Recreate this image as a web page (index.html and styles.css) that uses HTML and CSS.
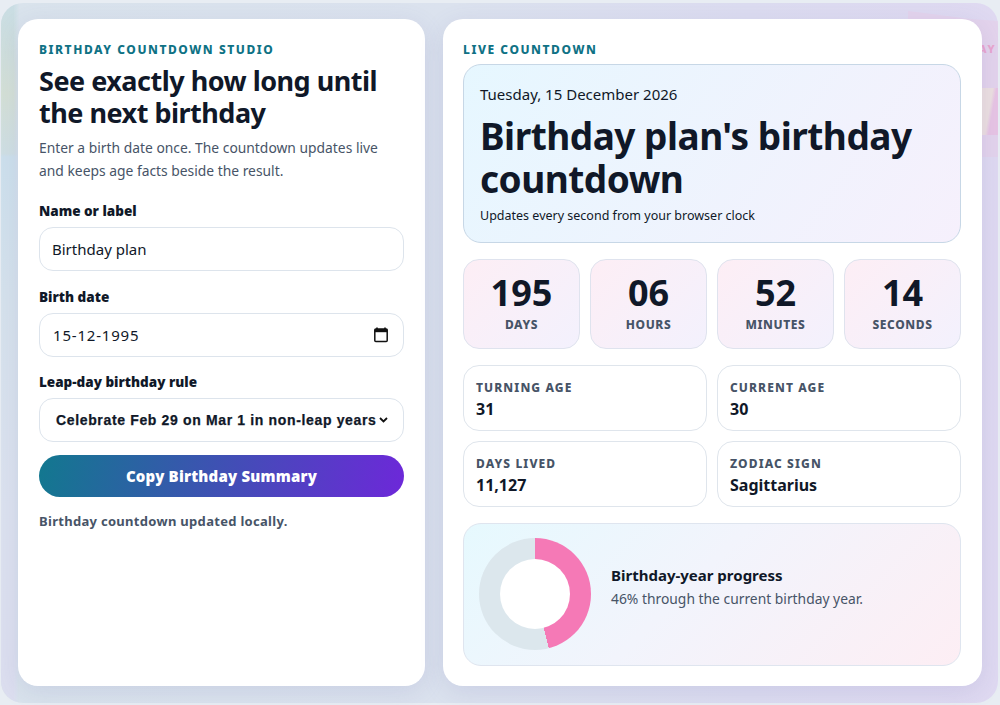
FILE: index.html
```html
<!DOCTYPE html>
<html lang="en">
<head>
    <meta charset="UTF-8">
    <meta name="viewport" content="width=device-width, initial-scale=1.0">
    <title>Birthday Countdown Studio</title>
    <link rel="stylesheet" href="styles.css">
</head>
<body>
    <div class="backdrop">
        <div class="deco-left"></div>
        <div class="deco-shape"></div>
        <div class="deco-band"></div>
        <div class="deco-tag">AY</div>
    </div>
    <main class="studio">
        <section class="card form-card">
            <div class="eyebrow">Birthday Countdown Studio</div>
            <h1>See exactly how long until the next birthday</h1>
            <p class="intro">Enter a birth date once. The countdown updates live and keeps age facts beside the result.</p>

            <label class="field-label" for="name">Name or label</label>
            <input class="field" id="name" type="text" value="Birthday plan">

            <label class="field-label" for="birth">Birth date</label>
            <div class="field-wrap">
                <input class="field date-field" id="birth" type="text" value="15-12-1995">
                <svg class="cal-icon" viewBox="0 0 14 16" width="14" height="16">
                    <path d="M3 0.5v2M11 0.5v2" stroke="#111" stroke-width="1.6" fill="none"/>
                    <rect x="0.8" y="2" width="12.4" height="12.6" rx="1" fill="none" stroke="#111" stroke-width="1.5"/>
                    <rect x="0.8" y="2" width="12.4" height="3.2" fill="#111"/>
                </svg>
            </div>

            <label class="field-label" for="rule">Leap-day birthday rule</label>
            <div class="field-wrap">
                <select class="field rule-field" id="rule">
                    <option>Celebrate Feb 29 on Mar 1 in non-leap years</option>
                </select>
                <svg class="chevron" viewBox="0 0 9 6" width="9" height="6">
                    <path d="M1 1l3.5 3.5L8 1" stroke="#111" stroke-width="1.8" fill="none"/>
                </svg>
            </div>

            <button class="copy-button">Copy Birthday Summary</button>
            <p class="status">Birthday countdown updated locally.</p>
        </section>

        <section class="card result-card">
            <div class="eyebrow">Live Countdown</div>
            <div class="hero">
                <div class="hero-date">Tuesday, 15 December 2026</div>
                <h2>Birthday plan's birthday countdown</h2>
                <div class="hero-note">Updates every second from your browser clock</div>
            </div>

            <div class="timer">
                <div class="unit"><strong>195</strong><span>Days</span></div>
                <div class="unit"><strong>06</strong><span>Hours</span></div>
                <div class="unit"><strong>52</strong><span>Minutes</span></div>
                <div class="unit"><strong>14</strong><span>Seconds</span></div>
            </div>

            <div class="facts">
                <div class="fact"><span>Turning age</span><strong>31</strong></div>
                <div class="fact"><span>Current age</span><strong>30</strong></div>
                <div class="fact"><span>Days lived</span><strong>11,127</strong></div>
                <div class="fact"><span>Zodiac sign</span><strong>Sagittarius</strong></div>
            </div>

            <div class="progress">
                <div class="ring"><div class="ring-hole"></div></div>
                <div class="progress-copy">
                    <div class="progress-title">Birthday-year progress</div>
                    <div class="progress-text">46% through the current birthday year.</div>
                </div>
            </div>
        </section>
    </main>
</body>
</html>
```

FILE: styles.css
```css
* {
    box-sizing: border-box;
}

html,
body {
    height: 100%;
}

body {
    margin: 0;
    height: 705px;
    overflow: hidden;
    position: relative;
    background-color: #e8edf3;
    color: #101828;
    font-family: "Noto Sans", "Open Sans", sans-serif;
}

/* blurred page behind the panels */
.backdrop {
    position: absolute;
    inset: 3px 2px 2px 1px;
    border-radius: 22px;
    overflow: hidden;
    background: linear-gradient(90deg, #d9e3ec 0%, #dbe2ee 45%, #dcdcf0 75%, #dfd9f1 100%);
}

.deco-left {
    position: absolute;
    top: 0;
    left: 0;
    width: 18px;
    height: 100%;
    background: linear-gradient(180deg, #c9dde4 0%, #d4e0d6 13%, #cfdfe3 21.5%, #cde0ec 22%, #d6e2ec 43%, #dce2ef 72%, #dcdeef 100%);
    mask-image: linear-gradient(90deg, #000 70%, transparent 100%);
}

.deco-shape {
    position: absolute;
    top: 8px;
    right: 0;
    width: 90px;
    height: 146px;
    background: #e3d3ec;
    clip-path: polygon(0 0, 70% 8px, 100% 10px, 100% 100%, 0 100%);
}

.deco-band {
    position: absolute;
    top: 85px;
    right: 0;
    width: 16px;
    height: 47px;
    background: linear-gradient(100deg, #ecdfe0 45%, #e7c4e4 60%);
}

.deco-tag {
    position: absolute;
    top: 38px;
    right: 2px;
    color: #e9a5cf;
    font-size: 11px;
    font-weight: 800;
    letter-spacing: 1.5px;
}

.studio {
    position: relative;
    display: grid;
    grid-template-columns: 407px 539px;
    gap: 18px;
    padding: 19px 18px;
    height: 705px;
}

.card {
    height: 667px;
    background: #fff;
    border-radius: 20px;
    box-shadow: 0 6px 24px rgba(100, 100, 170, 0.14);
}

.form-card {
    padding: 23px 21px;
}

.result-card {
    padding: 23px 21px 20px 20px;
}

.eyebrow {
    color: #0f7285;
    font-size: 12px;
    font-weight: 800;
    line-height: 16px;
    letter-spacing: 1.55px;
    text-transform: uppercase;
}

h1 {
    margin: 7px 0 0;
    font-size: 27px;
    line-height: 32px;
    font-weight: 700;
    letter-spacing: -0.5px;
}

.intro {
    margin: 7px 0 20.3px;
    color: #475467;
    font-size: 13.85px;
    line-height: 23px;
}

.field-label {
    display: block;
    margin: 16.5px 0 7px;
    font-size: 13.5px;
    line-height: 18px;
    font-weight: 900;
}

.field {
    display: block;
    width: 100%;
    height: 44px;
    padding: 0 12px;
    background: #fff;
    border: 1px solid #dde4ec;
    border-radius: 14px;
    color: #101828;
    font-family: inherit;
    font-size: 15px;
    outline: none;
}

.field-wrap {
    position: relative;
}

.date-field {
    padding-left: 13px;
    letter-spacing: 0.8px;
}

.cal-icon {
    position: absolute;
    top: 14px;
    right: 16px;
}

.chevron {
    position: absolute;
    top: 19px;
    right: 16px;
}

.rule-field {
    padding: 0 16px;
    appearance: none;
    font-family: "Liberation Sans", sans-serif;
    font-size: 14px;
    font-weight: 700;
    letter-spacing: 0.65px;
    -webkit-text-stroke: 0.25px #101828;
}

.copy-button {
    display: block;
    width: 100%;
    height: 42px;
    margin-top: 13px;
    border: 0;
    border-radius: 21px;
    background: linear-gradient(100deg, #12788f 0%, #6d28d9 100%);
    color: #fff;
    font-family: inherit;
    font-size: 15px;
    font-weight: 900;
    letter-spacing: 0.2px;
}

.status {
    margin: 15px 0 0;
    color: #475467;
    font-size: 13px;
    line-height: 18px;
    font-weight: 700;
    letter-spacing: 0.3px;
}

.hero {
    margin-top: 6px;
    height: 179px;
    padding: 19px 16px 0;
    border: 1px solid #c7d7e6;
    border-radius: 18px;
    background: linear-gradient(125deg, #e6f7ff 0%, #f6f0fc 100%);
}

.hero-date {
    font-size: 15px;
    line-height: 20px;
}

h2 {
    margin: 10px 0 0;
    font-size: 37px;
    line-height: 43px;
    font-weight: 700;
    letter-spacing: -0.5px;
}

.hero-note {
    margin-top: 7px;
    font-size: 12.5px;
    line-height: 18px;
}

.timer {
    display: grid;
    grid-template-columns: repeat(4, 1fr);
    gap: 10px;
    margin-top: 16px;
}

.unit {
    height: 90px;
    padding-top: 10px;
    border: 1px solid #dfe3ee;
    border-radius: 16px;
    background: linear-gradient(135deg, #fdeef5 0%, #f3f1fd 100%);
    text-align: center;
}

.unit strong {
    display: block;
    font-size: 36px;
    line-height: 46px;
    font-weight: 700;
}

.unit span {
    display: block;
    color: #475467;
    font-size: 12px;
    line-height: 18px;
    font-weight: 800;
    letter-spacing: 0.6px;
    text-transform: uppercase;
}

.facts {
    display: grid;
    grid-template-columns: repeat(2, 1fr);
    gap: 10px;
    margin-top: 16px;
}

.fact {
    height: 66px;
    padding: 14px 12px 0;
    border: 1px solid #dfe5ec;
    border-radius: 16px;
}

.fact span {
    display: block;
    color: #475467;
    font-size: 12px;
    line-height: 16px;
    font-weight: 800;
    letter-spacing: 1.1px;
    text-transform: uppercase;
}

.fact strong {
    display: block;
    margin-top: 2px;
    font-size: 16px;
    line-height: 22px;
    font-weight: 700;
}

.progress {
    display: flex;
    align-items: center;
    gap: 20px;
    height: 143px;
    margin-top: 16px;
    padding: 0 0 1px 15px;
    border: 1px solid #dfe5ef;
    border-radius: 18px;
    background: linear-gradient(135deg, #e6f9fe 0%, #f2f4fc 45%, #fdeef4 100%);
}

.ring {
    display: flex;
    align-items: center;
    justify-content: center;
    width: 112px;
    height: 112px;
    border-radius: 50%;
    background: conic-gradient(#f579b6 0 46%, #dce7ed 46% 100%);
}

.ring-hole {
    width: 70px;
    height: 70px;
    border-radius: 50%;
    background: #fff;
}

.progress-copy {
    padding-bottom: 15px;
}

.progress-title {
    font-size: 15px;
    line-height: 20px;
    font-weight: 700;
}

.progress-text {
    margin-top: 4px;
    color: #475467;
    font-size: 13.85px;
    line-height: 20px;
}
```
